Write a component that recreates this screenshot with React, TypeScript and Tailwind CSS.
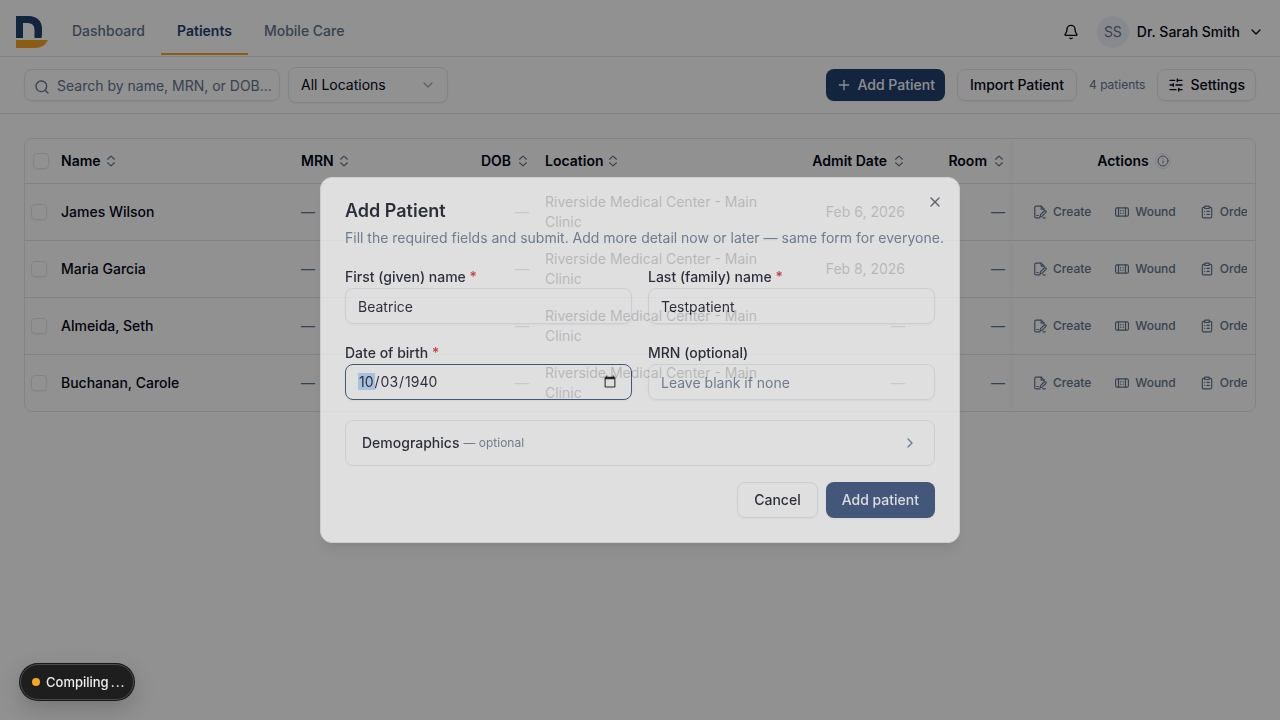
import {
  Bell,
  ChevronDown,
  ChevronRight,
  ClipboardList,
  Info,
  Plus,
  Search,
  SlidersHorizontal,
  X,
} from "lucide-react";
import { useState } from "react";
import type { ReactNode } from "react";

const patients = [
  { name: "James Wilson", admitDate: "Feb 6, 2026" },
  { name: "Maria Garcia", admitDate: "Feb 8, 2026" },
  { name: "Almeida, Seth", admitDate: null },
  { name: "Buchanan, Carole", admitDate: null },
];

export default function App() {
  return (
    <div className="min-h-screen bg-white font-['Inter',sans-serif] text-sm text-[#020617]">
      <Header />
      <Toolbar />
      <main className="px-6 pt-6">
        <PatientsTable />
      </main>
      <div className="fixed inset-0 z-40 bg-black/43" />
      <AddPatientDialog />
      <CompilingBadge />
    </div>
  );
}

function Header() {
  return (
    <header className="flex h-[57px] items-center border-b border-slate-200 px-4 pb-px">
      <a href="#home" aria-label="Home" className="mt-2">
        <Logo />
      </a>
      <nav className="ml-2 flex self-stretch pt-1.5 font-medium text-slate-500">
        <a href="#dashboard" className="flex items-center px-4">
          Dashboard
        </a>
        <a
          href="#patients"
          className="flex items-center border-b-2 border-[#f5a31f] px-4 pt-0.5 font-semibold text-[#224070]"
        >
          Patients
        </a>
        <a href="#mobile-care" className="flex items-center px-4">
          Mobile Care
        </a>
      </nav>
      <div className="ml-auto flex items-center gap-2 pt-2">
        <button aria-label="Notifications" className="flex size-9 items-center justify-center">
          <Bell className="size-4" />
        </button>
        <button className="flex items-center gap-2 font-medium">
          <span className="flex size-8 items-center justify-center rounded-full bg-[#eef1fa] font-normal text-slate-500">
            SS
          </span>
          Dr. Sarah Smith
          <ChevronDown className="size-4" />
        </button>
      </div>
    </header>
  );
}

function Logo() {
  return (
    <svg viewBox="0 0 32 32" className="size-8">
      <path
        d="M0 0h12.500C21 0 26 5 26 12.500V18q0 2-.6 4H18.500V14q0-7-7-7H7v15H0z"
        fill="#224070"
      />
      <path d="M0 24h32q-4 8-13 8H0z" fill="#f5a31f" />
    </svg>
  );
}

function Toolbar() {
  return (
    <div className="flex h-[57px] items-center gap-2 border-b border-slate-200 px-6">
      <div className="relative w-64">
        <Search className="absolute top-2.5 left-2.5 size-4 text-slate-500" />
        <input
          type="text"
          aria-label="Search patients"
          placeholder="Search by name, MRN, or DOB..."
          className="block h-8 w-full rounded-lg border border-slate-200 pr-1 pl-8 shadow-xs placeholder:text-slate-500"
        />
      </div>
      <div className="relative w-40">
        <select
          aria-label="Location"
          className="block h-9 w-full appearance-none rounded-lg border border-slate-200 px-3 shadow-xs"
        >
          <option>All Locations</option>
        </select>
        <ChevronDown className="pointer-events-none absolute top-2.5 right-3 size-4 text-slate-500 opacity-60" />
      </div>
      <div className="ml-auto flex items-center gap-3 font-medium">
        <button className="flex h-8 items-center gap-1.5 rounded-lg bg-[#224070] px-2.5 text-slate-50 shadow-xs">
          <Plus className="size-4" />
          Add Patient
        </button>
        <button className="h-8 rounded-lg border border-slate-200 px-3 shadow-xs">
          Import Patient
        </button>
        <span className="text-xs font-normal text-slate-500">4 patients</span>
        <button className="flex h-8 items-center gap-1.5 rounded-lg border border-slate-200 px-2.5 shadow-xs">
          <SlidersHorizontal className="size-4" />
          Settings
        </button>
      </div>
    </div>
  );
}

function PatientsTable() {
  return (
    <div className="overflow-hidden rounded-lg border border-slate-200">
      <table className="w-full table-fixed border-collapse">
        <colgroup>
          <col className="w-7" />
          <col />
          <col className="w-30" />
          <col className="w-[124px]" />
          <col className="w-59" />
          <col className="w-35" />
          <col className="w-[100px]" />
          <col className="w-[242px]" />
        </colgroup>
        <thead>
          <tr className="h-11 border-b border-slate-200">
            <th className="pl-2">
              <Checkbox label="Select all patients" />
            </th>
            <SortHeader>Name</SortHeader>
            <SortHeader>MRN</SortHeader>
            <SortHeader right>DOB</SortHeader>
            <SortHeader>Location</SortHeader>
            <SortHeader right>Admit Date</SortHeader>
            <SortHeader right>Room</SortHeader>
            <th className="px-2 font-semibold shadow-[-4px_0_6px_-2px_rgba(0,0,0,0.05)]">
              <span className="flex items-center justify-center gap-1.5">
                Actions
                <button
                  aria-label="About actions"
                  className="flex size-4 items-center justify-center rounded-full border border-slate-200"
                >
                  <Info className="size-3 shrink-0 text-slate-500" />
                </button>
              </span>
            </th>
          </tr>
        </thead>
        <tbody>
          {patients.map((patient) => (
            <tr key={patient.name} className="h-[57px] border-b border-slate-200 last:border-b-0">
              <td className="pl-1.5">
                <Checkbox label={`Select ${patient.name}`} />
              </td>
              <td className="px-2 font-medium">{patient.name}</td>
              <td className="px-2 text-slate-500">—</td>
              <td className="px-2 text-right text-slate-500">—</td>
              <td className="px-2 py-2">Riverside Medical Center - Main Clinic</td>
              <td className="px-2 text-right">
                {patient.admitDate ?? <span className="text-slate-500">—</span>}
              </td>
              <td className="px-2 text-right text-slate-500">—</td>
              <td className="px-2 shadow-[-4px_0_6px_-2px_rgba(0,0,0,0.05)]">
                <div className="flex gap-2 overflow-hidden pl-1 text-xs font-medium text-slate-500">
                  <RowAction icon={<CreateIcon />}>Create</RowAction>
                  <RowAction icon={<WoundIcon />}>Wound</RowAction>
                  <RowAction icon={<ClipboardList className="size-3.5" />}>Orders</RowAction>
                </div>
              </td>
            </tr>
          ))}
        </tbody>
      </table>
    </div>
  );
}

function SortHeader({ children, right }: { children: ReactNode; right?: boolean }) {
  return (
    <th className="px-2 font-semibold">
      <button className={right ? "ml-auto flex items-center gap-1.5" : "flex items-center gap-1"}>
        {children}
        <svg
          viewBox="0 0 12 12"
          className="size-3 text-slate-500"
          fill="none"
          stroke="currentColor"
          strokeLinecap="round"
          strokeLinejoin="round"
          strokeWidth="1.2"
        >
          <path d="M2.600 4.200 6 1.100l3.400 3.100M2.600 7.800 6 10.900l3.400-3.100" />
        </svg>
      </button>
    </th>
  );
}

function Checkbox({ label }: { label: string }) {
  return (
    <input
      type="checkbox"
      aria-label={label}
      className="block size-4 appearance-none rounded border border-slate-200 shadow-xs"
    />
  );
}

function RowAction({ icon, children }: { icon: ReactNode; children: ReactNode }) {
  return (
    <button className="flex shrink-0 items-center gap-1.5 px-2">
      {icon}
      {children}
    </button>
  );
}

function CreateIcon() {
  return (
    <svg
      viewBox="0 0 24 24"
      className="size-3.5"
      fill="none"
      stroke="currentColor"
      strokeLinecap="round"
      strokeLinejoin="round"
      strokeWidth="2"
    >
      <path d="M19 8V7l-5-5H5a2 2 0 0 0-2 2v16a2 2 0 0 0 2 2h7" />
      <path d="M14 2v5h5" />
      <path d="M6.500 18H9" />
      <path d="m13 16.500 6.200-6.200a1.900 1.900 0 0 1 2.700 2.700l-6.200 6.200-3.700 1z" />
      <path d="M17 22h4" />
    </svg>
  );
}

function WoundIcon() {
  return (
    <svg
      viewBox="0 0 24 24"
      className="size-3.5"
      fill="none"
      stroke="currentColor"
      strokeLinecap="round"
      strokeLinejoin="round"
      strokeWidth="2"
    >
      <rect x="1" y="5" width="22" height="14" rx="2.500" />
      <path d="M6 5v14M18 5v14" />
      <path
        strokeWidth="1.6"
        d="M9.500 9.500h.01M12 9.500h.01M14.500 9.500h.01M9.500 12h.01M14.500 12h.01M9.500 14.500h.01M12 14.500h.01M14.500 14.500h.01"
      />
    </svg>
  );
}

function AddPatientDialog() {
  const [dob, setDob] = useState("1940-10-03");

  return (
    <div className="fixed inset-0 z-50 flex items-center justify-center">
      <form
        role="dialog"
        aria-labelledby="dialog-title"
        className="relative w-full max-w-[640px] rounded-xl border border-slate-200 bg-white p-6 opacity-71 shadow-lg"
      >
        <h2 id="dialog-title" className="text-lg leading-none font-semibold">
          Add Patient
        </h2>
        <p className="mt-2 text-slate-500 sm:whitespace-nowrap">
          Fill the required fields and submit. Add more detail now or later — same form for
          everyone.
        </p>
        <button type="button" aria-label="Close" className="absolute top-4 right-4 opacity-70">
          <X className="size-4" />
        </button>
        <div className="mt-[22px] grid grid-cols-2 gap-x-4 gap-y-[22px]">
          <Field id="first-name" label="First (given) name" required>
            <input
              id="first-name"
              defaultValue="Beatrice"
              className="h-9 w-full rounded-lg border border-slate-200 px-3 shadow-xs"
            />
          </Field>
          <Field id="last-name" label="Last (family) name" required>
            <input
              id="last-name"
              defaultValue="Testpatient"
              className="h-9 w-full rounded-lg border border-slate-200 px-3 shadow-xs"
            />
          </Field>
          <Field id="dob" label="Date of birth" required>
            <input
              id="dob"
              type="date"
              value={dob}
              onChange={(e) => setDob(e.target.value)}
              className="h-9 w-full rounded-lg border border-[#224070] px-3 shadow-xs outline-none [&::-webkit-datetime-edit-month-field]:bg-[#b1d7ff]"
            />
          </Field>
          <Field id="mrn" label="MRN (optional)">
            <input
              id="mrn"
              placeholder="Leave blank if none"
              className="h-9 w-full rounded-lg border border-slate-200 px-3 shadow-xs placeholder:text-slate-500"
            />
          </Field>
        </div>
        <button
          type="button"
          className="mt-5 flex h-[46px] w-full items-center gap-1 rounded-lg border border-slate-200 px-4 font-medium"
        >
          Demographics
          <span className="text-xs font-normal text-slate-500">— optional</span>
          <ChevronRight className="ml-auto size-4 text-slate-500" />
        </button>
        <div className="mt-4 flex justify-end gap-2 font-medium">
          <button type="button" className="h-9 rounded-lg border border-slate-200 px-4 shadow-xs">
            Cancel
          </button>
          <button
            type="button"
            className="h-9 rounded-lg bg-[#224070] px-4 text-slate-50 shadow-xs"
          >
            Add patient
          </button>
        </div>
      </form>
    </div>
  );
}

function Field({
  id,
  label,
  required,
  children,
}: {
  id: string;
  label: string;
  required?: boolean;
  children: ReactNode;
}) {
  return (
    <div className="flex flex-col gap-1">
      <label htmlFor={id} className="leading-none font-medium">
        {label} {required && <span className="text-[#dc2020]">*</span>}
      </label>
      {children}
    </div>
  );
}

function CompilingBadge() {
  return (
    <div
      role="status"
      className="fixed bottom-5 left-5 z-60 flex h-9 items-center rounded-full border border-[#4a4a4a] bg-[#1e1e1e] pr-2 pl-[11px] text-[13px] font-medium text-[#ededed] shadow-[0_0_0_1px_#171717,0_8px_24px_rgba(0,0,0,0.2)]"
    >
      <span className="mr-1.5 size-2 rounded-full bg-[#f5a623]" />
      Compiling
      <span className="ml-0.5 flex gap-px">
        <span>.</span>
        <span>.</span>
        <span>.</span>
      </span>
    </div>
  );
}
